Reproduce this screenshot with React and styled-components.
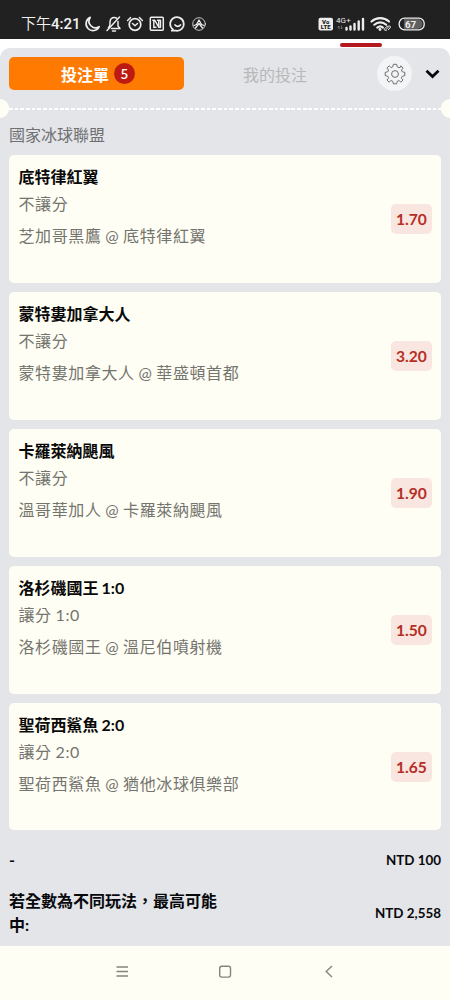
import React from 'react';
import styled, { createGlobalStyle } from 'styled-components';

const GlobalStyle = createGlobalStyle`
  * {
    box-sizing: border-box;
  }

  body {
    margin: 0;
    background: #fff;
    font-family: Lato, 'Noto Sans CJK TC', sans-serif;
  }
`;

const Screen = styled.div`
  display: flex;
  flex-direction: column;
  width: 450px;
  height: 1000px;
  overflow: hidden;
  background: #fff;
`;

const StatusBar = styled.div`
  display: flex;
  justify-content: space-between;
  flex: none;
  height: 39px;
  padding: 9px 25px 0 21px;
  background: #212121;
  color: #f1f1f1;
`;

const StatusGroup = styled.div`
  display: flex;
  align-items: center;
  height: 30px;
`;

const Clock = styled.span`
  width: 62px;
  font: 500 15px/30px Roboto, 'Noto Sans CJK TC', sans-serif;
  white-space: nowrap;

  span {
    font-weight: 350;
  }
`;

const Strip = styled.div`
  flex: none;
  height: 9px;
  padding: 4px 0 0 340px;
`;

const Handle = styled.div`
  width: 42px;
  height: 4px;
  border-radius: 2px;
  background: #b3191e;
`;

const Panel = styled.main`
  flex: none;
  height: 898px;
  border-radius: 10px 10px 0 0;
  background: #e4e5e8;
`;

const Tabs = styled.div`
  display: flex;
  align-items: center;
  height: 51px;
  padding-left: 9px;
`;

const Tab = styled.div`
  display: flex;
  align-items: center;
  justify-content: center;
  gap: 5px;
  width: ${p => (p.$active ? 175 : 182)}px;
  height: 33px;
  padding-left: ${p => (p.$active ? 3 : 0)}px;
  border-radius: 5px;
  background: ${p => (p.$active ? '#ff7a00' : 'transparent')};
  color: ${p => (p.$active ? '#fff' : '#b7b8ba')};
  font-size: 16px;
  font-weight: ${p => (p.$active ? 700 : 400)};
`;

const Count = styled.span`
  width: 21px;
  height: 21px;
  border-radius: 50%;
  background: #bd1b12;
  font-family: 'Noto Sans CJK TC', sans-serif;
  font-size: 13px;
  font-weight: 500;
  line-height: 21px;
  text-align: center;
`;

const GearButton = styled.div`
  display: flex;
  align-items: center;
  justify-content: center;
  width: 35px;
  height: 35px;
  margin-left: 11px;
  border-radius: 50%;
  background: #f3f4f6;
`;

const Chevron = styled.svg`
  margin-left: 13px;
`;

const Divider = styled.div`
  display: flex;
  align-items: center;
  height: 19px;
`;

const Notch = styled.span`
  width: 9px;
  height: 19px;
  border-radius: ${p => (p.$right ? '10px 0 0 10px' : '0 10px 10px 0')};
  background: #fffef4;
`;

const Dashes = styled.span`
  flex: 1;
  height: 2px;
  background: repeating-linear-gradient(90deg, #fff 0 3.7px, transparent 3.7px 5.65px);
`;

const League = styled.h2`
  height: 37px;
  margin: 0;
  padding-left: 9px;
  color: #6f7073;
  font-size: 16px;
  font-weight: 400;
  line-height: 34px;
`;

const Bets = styled.div`
  display: flex;
  flex-direction: column;
  gap: 9px;
  padding: 0 9px;
`;

const Card = styled.div`
  display: flex;
  align-items: center;
  justify-content: space-between;
  height: 127.9px;
  padding: 0 9px 0 9.5px;
  border-radius: 5px;
  background: #fffef4;
`;

const Info = styled.div`
  align-self: flex-start;
  padding-top: 9px;
`;

const Pick = styled.h3`
  margin: 0;
  color: #090909;
  font-size: 16px;
  font-weight: 700;
  line-height: 26px;
  word-spacing: -0.8px;
`;

const Detail = styled.p`
  margin: 0;
  color: #74746f;
  font-size: 16px;
  letter-spacing: 0.6px;
  line-height: ${p => p.$height}px;
  word-spacing: -0.9px;
`;

const Odds = styled.span`
  width: 41px;
  height: 30px;
  border-radius: 5px;
  background: #f9e6e0;
  color: #b52e25;
  font-size: 15.6px;
  font-weight: 700;
  line-height: 30px;
  text-align: center;
`;

const Summary = styled.div`
  display: flex;
  align-items: center;
  justify-content: space-between;
  height: ${p => p.$height}px;
  padding: 1px 9px 0;
  color: #08090c;
  font-weight: 700;
`;

const Label = styled.span`
  width: 216px;
  font-size: 16px;
  line-height: 23.5px;
`;

const Amount = styled.span`
  font-size: 13.4px;
`;

const NavBar = styled.nav`
  display: flex;
  flex: 1;
  align-items: flex-start;
  justify-content: center;
  gap: 88px;
  padding-top: 18px;
  background: #fffef4;
`;

const bets = [
  { pick: '底特律紅翼', market: '不讓分', match: '芝加哥黑鷹 @ 底特律紅翼', odds: '1.70' },
  { pick: '蒙特婁加拿大人', market: '不讓分', match: '蒙特婁加拿大人 @ 華盛頓首都', odds: '3.20' },
  { pick: '卡羅萊納颶風', market: '不讓分', match: '溫哥華加人 @ 卡羅萊納颶風', odds: '1.90' },
  { pick: '洛杉磯國王 1:0', market: '讓分 1:0', match: '洛杉磯國王 @ 溫尼伯噴射機', odds: '1.50' },
  { pick: '聖荷西鯊魚 2:0', market: '讓分 2:0', match: '聖荷西鯊魚 @ 猶他冰球俱樂部', odds: '1.65' }
];

const LeftIcons = () => (
  <svg width="124" height="20" viewBox="83 14 124 20" fill="none" stroke="#eee" strokeWidth="1.7" strokeLinecap="round" strokeLinejoin="round">
    {/* moon */}
    <path d="M90.2 17.4a6.9 6.9 0 1 0 9 9.300a6.600 6.600 0 0 1-9-9.300z" />
    {/* muted bell */}
    <path d="M107 30.500L119.500 17M108.500 27.500c1.700-1 1.500-2.500 1.500-5c0-3.200 2-5 4.500-5c.8 0 1.500.2 2 .6M118 21.500v4.500l2 2.500h-8.500M112.500 31h3" strokeWidth="1.500" />
    {/* alarm */}
    <circle cx="135" cy="24.500" r="5.800" />
    <path d="M127.600 20.500l3-3M142.400 20.500l-3-3M132.500 23.500l2.500 2.200l2.500-2.200" strokeWidth="1.500" />
    {/* nfc */}
    <rect x="150.300" y="17.300" width="13" height="13" rx="1" strokeWidth="1.500" />
    <path d="M152.800 20.300h2l3.800 6.500M153.800 27.500v-6.500M156 27.300h-2.200M157.500 20.300h3v7h-1.800v-6.500" strokeWidth="1.400" />
    {/* message */}
    <path d="M173 29.500a6.800 6.800 0 1 1 3 1.200h-4.300M175 25c1.500 1.800 4 1.800 5.500 0" />
    {/* round badge */}
    <circle cx="199" cy="24" r="6.300" strokeWidth="0.800" />
    <path d="M194 25.500l2.500-1l2.500-4.500l2.500 4.500l2.500 1M195.500 28l3.500-4.500l3.500 4.500" strokeWidth="1.300" />
  </svg>
);

const RightIcons = () => (
  <svg width="108" height="20" viewBox="317 14 108 20" fill="none" stroke="#eee" strokeLinecap="round">
    <rect x="318.500" y="17.700" width="14.500" height="12.800" rx="2" fill="#eee" stroke="none" />
    <g fill="#212121" stroke="none" fontFamily="Roboto, sans-serif" fontWeight="900" fontSize="6" textAnchor="middle">
      <text x="325.700" y="23.600">Vo</text>
      <text x="325.700" y="29.300">LTE</text>
    </g>
    <text x="336" y="22.700" fill="#eee" stroke="none" fontFamily="Roboto, sans-serif" fontSize="8" letterSpacing="0.100">4G+</text>
    <path d="M339 29v-3l-1.200 1.200M341.300 26v3l1.200-1.200" stroke="#888" strokeWidth="0.800" />
    <path d="M346.500 29.500v-1.500M350.500 29.500v-3M354.500 29.500v-5.500M358.700 29.500v-8M363 29.500v-10.500" strokeWidth="2.400" />
    <path d="M371.500 21.500c5-4.600 12.500-4.600 17.500 0M374.300 24.700c3.500-3.100 8.400-3.100 11.900 0M377.300 27.600c1.800-1.500 4-1.500 5.600 0" strokeWidth="2.200" />
    <circle cx="380" cy="29.500" r="1.400" fill="#eee" stroke="none" />
    <path d="M386.500 30.200c-2.300 1-3-.8-1.300-2.200l1.500-1.300M387.500 26.500c2-1.500 3.800-.2 2.500 1.500l-1.800 1.700M386.200 29.300l2.500-2.500" strokeWidth="1" />
    <path d="M404 19h13.500a5 5 0 0 1 0 10H404z" fill="#606060" stroke="none" />
    <rect x="399.200" y="18.200" width="25" height="11.600" rx="5.300" strokeWidth="1.300" />
    <text x="410.600" y="27.500" fill="#eee" stroke="none" fontFamily="Roboto, sans-serif" fontWeight="700" fontSize="9.800" textAnchor="middle">67</text>
  </svg>
);

const Gear = () => (
  <svg width="22" height="22" viewBox="-11 -11 22 22" fill="none" stroke="#5c5d60" strokeWidth="0.900" strokeLinejoin="round">
    <path d="M-1.600-9.700H1.600L2.300-7.200Q4-5.800 5.400-6.700L5.800-8.200L8.100-5.900L6.700-4.200Q6.200-2.800 7.400-2.200L9.800-1.600V1.600L7.300 2.300Q6 3 6.700 4.600L8.100 6L5.900 8.100L4.300 6.900Q3 6.100 2.300 7.300L1.600 9.800H-1.600L-2.300 7.300Q-3 6.100-4.300 6.900L-5.900 8.100L-8.100 6L-6.700 4.600Q-6 3-7.300 2.300L-9.800 1.600V-1.600L-7.400-2.200Q-6.200-2.800-6.700-4.200L-8.100-5.900L-5.800-8.200L-4.500-6.900Q-3-6-2.300-7.200Z" />
    <circle r="3.400" />
  </svg>
);

export default () => (
  <>
    <GlobalStyle />
    <Screen>
      <StatusBar>
        <StatusGroup>
          <Clock>
            <span>下午</span>4:21
          </Clock>
          <LeftIcons />
        </StatusGroup>
        <StatusGroup>
          <RightIcons />
        </StatusGroup>
      </StatusBar>
      <Strip>
        <Handle />
      </Strip>
      <Panel>
        <Tabs>
          <Tab $active>
            投注單<Count>5</Count>
          </Tab>
          <Tab>我的投注</Tab>
          <GearButton>
            <Gear />
          </GearButton>
          <Chevron width="15" height="10" viewBox="0 0 15 10" fill="none" stroke="#090909" strokeWidth="2.800">
            <path d="M1.500 1.800l6 5.700l6-5.700" />
          </Chevron>
        </Tabs>
        <Divider>
          <Notch />
          <Dashes />
          <Notch $right />
        </Divider>
        <League>國家冰球聯盟</League>
        <Bets>
          {bets.map(bet => (
            <Card key={bet.pick}>
              <Info>
                <Pick>{bet.pick}</Pick>
                <Detail $height={28}>{bet.market}</Detail>
                <Detail $height={35}>{bet.match}</Detail>
              </Info>
              <Odds>{bet.odds}</Odds>
            </Card>
          ))}
        </Bets>
        <Summary $height={58}>
          <Label>-</Label>
          <Amount>NTD 100</Amount>
        </Summary>
        <Summary $height={48}>
          <Label>若全數為不同玩法，最高可能中:</Label>
          <Amount>NTD 2,558</Amount>
        </Summary>
      </Panel>
      <NavBar>
        <svg width="16" height="16" viewBox="0 0 16 16" fill="none" stroke="#85857f" strokeWidth="1.300">
          <path d="M3.500 3h11.500M3.500 7.500h11.500M3.500 12h11.500" />
        </svg>
        <svg width="16" height="16" viewBox="0 0 16 16" fill="none" stroke="#85857f" strokeWidth="1.400">
          <rect x="2.700" y="2.300" width="10.800" height="10.800" rx="2" />
        </svg>
        <svg width="16" height="16" viewBox="0 0 16 16" fill="none" stroke="#85857f" strokeWidth="1.400">
          <path d="M11 2L5.200 7.500l5.800 5.500" />
        </svg>
      </NavBar>
    </Screen>
  </>
);
